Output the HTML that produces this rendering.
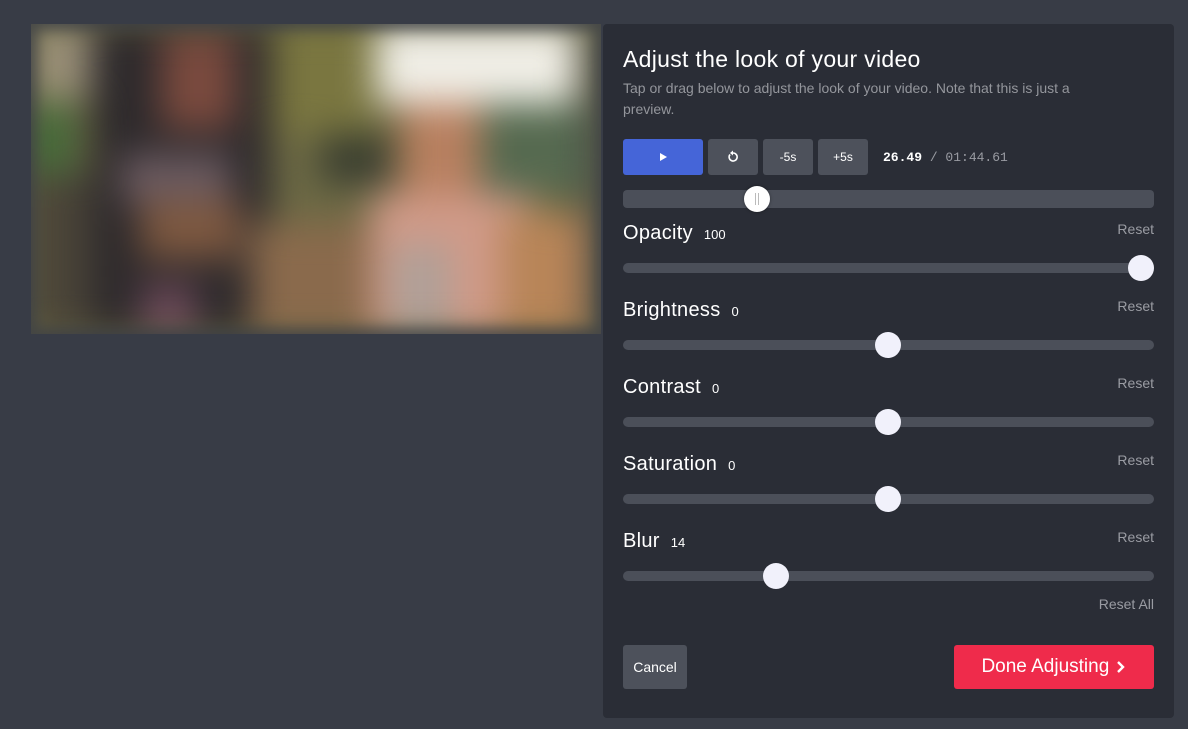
<!DOCTYPE html>
<html><head><meta charset="utf-8"><style>
*{margin:0;padding:0;box-sizing:border-box}
body{width:1188px;height:729px;background:#383c46;font-family:"Liberation Sans",sans-serif;position:relative;overflow:hidden}
.v{position:absolute;left:31px;top:24px;width:570px;height:310px;overflow:hidden;background:#6d6a45}
.v .in{position:absolute;left:0;top:0;width:570px;height:310px;filter:blur(18px)}
.v .sh{position:absolute;inset:0;box-shadow:inset 0 0 14px 6px rgba(56,60,70,.75)}
.b{position:absolute}
.p{position:absolute;left:603px;top:24px;width:571px;height:694px;background:#2a2d36;border-radius:4px}
.a{position:absolute;color:#fff}
.btn{position:absolute;top:139px;height:36px;border-radius:3px;background:#4d515b;color:#fff;font-size:12px;display:flex;align-items:center;justify-content:center}
.track{position:absolute;left:623px;width:531px;height:10px;border-radius:5px;background:#4b4f59}
.th{position:absolute;width:26px;height:26px;border-radius:50%;background:#f1f1fb}
.lab{position:absolute;left:623px;color:#fff;font-size:20px;letter-spacing:.3px}
.lab span{font-size:13px;margin-left:11px;letter-spacing:0}
.rs{position:absolute;right:34px;color:#9a9ca3;font-size:14px}
</style></head><body>
<div class="v"><div class="in">
<div class="b" style="left:0;top:0;width:110px;height:75px;background:#9a9078"></div>
<div class="b" style="left:0;top:80px;width:40px;height:70px;background:#3f6a38"></div>
<div class="b" style="left:0;top:150px;width:60px;height:160px;background:#4a4438"></div>
<div class="b" style="left:60px;top:0;width:180px;height:310px;background:#2e2a2c"></div>
<div class="b" style="left:130px;top:10px;width:75px;height:95px;background:#7a4a3e"></div>
<div class="b" style="left:90px;top:130px;width:110px;height:50px;background:#6a5a60"></div>
<div class="b" style="left:110px;top:175px;width:100px;height:60px;background:#7d5840"></div>
<div class="b" style="left:110px;top:260px;width:55px;height:50px;background:#6a4858"></div>
<div class="b" style="left:240px;top:0;width:110px;height:110px;background:#7a7640"></div>
<div class="b" style="left:290px;top:110px;width:70px;height:50px;background:#3a3e30"></div>
<div class="b" style="left:220px;top:200px;width:120px;height:110px;background:#8a6a4c"></div>
<div class="b" style="left:345px;top:0;width:200px;height:80px;background:#f0eee6"></div>
<div class="b" style="left:450px;top:80px;width:110px;height:90px;background:#566a50"></div>
<div class="b" style="left:370px;top:80px;width:80px;height:90px;background:#b88060"></div>
<div class="b" style="left:340px;top:170px;width:160px;height:140px;background:#d09a88"></div>
<div class="b" style="left:360px;top:220px;width:60px;height:90px;background:#b0a098"></div>
<div class="b" style="left:470px;top:190px;width:90px;height:120px;background:#b88558"></div>
<div class="b" style="left:555px;top:0;width:15px;height:310px;background:#44464a"></div>
</div><div class="sh"></div></div>
<div class="p"></div>
<div class="a" style="left:623px;top:46px;font-size:23px;letter-spacing:.3px">Adjust the look of your video</div>
<div class="a" style="left:623px;top:78px;width:500px;font-size:14px;line-height:21px;color:#94969c">Tap or drag below to adjust the look of your video. Note that this is just a preview.</div>
<div class="btn" style="left:623px;width:80px;background:#4565d8"><svg width="10" height="10"><path d="M2 1L9 5L2 9Z" fill="#fff"/></svg></div>
<div class="btn" style="left:708px;width:50px"><svg width="14" height="14" viewBox="0 0 14 14"><path d="M4 4.5A4 4 0 1 0 7 3" fill="none" stroke="#fff" stroke-width="1.6"/><path d="M7 0.5L7 5.5L4 3Z" fill="#fff"/></svg></div>
<div class="btn" style="left:763px;width:50px">-5s</div>
<div class="btn" style="left:818px;width:50px">+5s</div>
<div class="a" style="left:883px;top:150px;font-family:'Liberation Mono',monospace;font-size:13px;color:#9a9ca3"><b style="color:#fff">26.49</b> / 01:44.61</div>
<div class="track" style="top:190px;height:18px;border-radius:4px"></div>
<div class="th" style="left:744px;top:186px;background:#fff;box-shadow:0 0 3px rgba(0,0,0,.4)"><div style="position:absolute;left:11px;top:7px;width:4px;height:12px;border-left:1px solid #bbb;border-right:1px solid #bbb"></div></div>

<div class="lab" style="top:222px">Opacity<span>100</span></div><div class="rs" style="top:221px">Reset</div>
<div class="track" style="top:263px"></div><div class="th" style="left:1128px;top:255px"></div>
<div class="lab" style="top:299px">Brightness<span>0</span></div><div class="rs" style="top:298px">Reset</div>
<div class="track" style="top:340px"></div><div class="th" style="left:875px;top:332px"></div>
<div class="lab" style="top:376px">Contrast<span>0</span></div><div class="rs" style="top:375px">Reset</div>
<div class="track" style="top:417px"></div><div class="th" style="left:875px;top:409px"></div>
<div class="lab" style="top:453px">Saturation<span>0</span></div><div class="rs" style="top:452px">Reset</div>
<div class="track" style="top:494px"></div><div class="th" style="left:875px;top:486px"></div>
<div class="lab" style="top:530px">Blur<span>14</span></div><div class="rs" style="top:529px">Reset</div>
<div class="track" style="top:571px"></div><div class="th" style="left:763px;top:563px"></div>
<div class="rs" style="top:596px;font-size:14px">Reset All</div>
<div class="a" style="left:623px;top:645px;width:64px;height:44px;background:#4d515b;border-radius:3px;font-size:14px;display:flex;align-items:center;justify-content:center">Cancel</div>
<div class="a" style="left:954px;top:645px;width:200px;height:44px;background:#ef2b4b;border-radius:3px;font-size:19px;display:flex;align-items:center;justify-content:center">Done Adjusting&nbsp;<svg width="12" height="14" viewBox="0 0 12 14"><path d="M3 2L8 7L3 12" fill="none" stroke="#fff" stroke-width="2.4"/></svg></div>
</body></html>
